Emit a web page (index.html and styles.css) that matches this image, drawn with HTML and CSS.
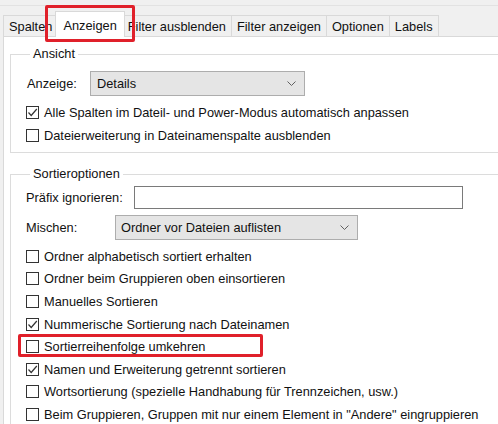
FILE: index.html
```html
<!DOCTYPE html>
<html lang="de">
<head>
<meta charset="utf-8">
<title>Anzeigen</title>
<link rel="stylesheet" href="styles.css">
</head>
<body>
<div class="window">
  <div class="topline"></div>
  <div class="tabs">
    <div class="tab">Spalten</div>
    <div class="tab tab-active">Anzeigen</div>
    <div class="tab">Filter ausblenden</div>
    <div class="tab">Filter anzeigen</div>
    <div class="tab">Optionen</div>
    <div class="tab">Labels</div>
  </div>
  <div class="panel">
    <fieldset class="group group-ansicht">
      <legend>Ansicht</legend>
      <div class="row row-field">
        <span class="label label-anzeige">Anzeige:</span>
        <div class="combo combo-anzeige"><span>Details</span><svg class="chev" width="9" height="5" viewBox="0 0 9 5"><polyline points="0.5,0.5 4.5,4.5 8.5,0.5" fill="none" stroke="#606060" stroke-width="1"/></svg></div>
      </div>
      <div class="check checked"><span class="box"><svg width="11" height="11" viewBox="0 0 11 11"><polyline points="1.5,5.5 4.2,8.5 9.8,2" fill="none" stroke="#333" stroke-width="1.2"/></svg></span>Alle Spalten im Dateil- und Power-Modus automatisch anpassen</div>
      <div class="check"><span class="box"></span>Dateierweiterung in Dateinamenspalte ausblenden</div>
    </fieldset>

    <fieldset class="group group-sort">
      <legend>Sortieroptionen</legend>
      <div class="row row-prefix">
        <span class="label label-prefix">Präfix ignorieren:</span>
        <div class="textbox"></div>
      </div>
      <div class="row row-mischen">
        <span class="label label-mischen">Mischen:</span>
        <div class="combo combo-mischen"><span>Ordner vor Dateien auflisten</span><svg class="chev" width="9" height="5" viewBox="0 0 9 5"><polyline points="0.5,0.5 4.5,4.5 8.5,0.5" fill="none" stroke="#606060" stroke-width="1"/></svg></div>
      </div>
      <div class="checks">
        <div class="check"><span class="box"></span>Ordner alphabetisch sortiert erhalten</div>
        <div class="check"><span class="box"></span>Ordner beim Gruppieren oben einsortieren</div>
        <div class="check"><span class="box"></span>Manuelles Sortieren</div>
        <div class="check checked"><span class="box"><svg width="11" height="11" viewBox="0 0 11 11"><polyline points="1.5,5.5 4.2,8.5 9.8,2" fill="none" stroke="#333" stroke-width="1.2"/></svg></span>Nummerische Sortierung nach Dateinamen</div>
        <div class="check"><span class="box"></span>Sortierreihenfolge umkehren</div>
        <div class="check checked"><span class="box"><svg width="11" height="11" viewBox="0 0 11 11"><polyline points="1.5,5.5 4.2,8.5 9.8,2" fill="none" stroke="#333" stroke-width="1.2"/></svg></span>Namen und Erweiterung getrennt sortieren</div>
        <div class="check"><span class="box"></span>Wortsortierung (spezielle Handhabung für Trennzeichen, usw.)</div>
        <div class="check"><span class="box"></span>Beim Gruppieren, Gruppen mit nur einem Element in "Andere" eingruppieren</div>
      </div>
    </fieldset>
  </div>
  <div class="mark mark-tab"></div>
  <div class="mark mark-row"></div>
</div>
</body>
</html>
```

FILE: styles.css
```css
html, body {
  margin: 0;
  padding: 0;
}
body {
  background: #f0f0f0;
  font-family: "Liberation Sans", Arial, sans-serif;
  font-size: 12.8px;
  color: #111;
  overflow: hidden;
  width: 498px;
  height: 424px;
}
.window {
  position: relative;
  width: 498px;
  height: 424px;
  overflow: hidden;
}
.topline {
  height: 5px;
  border-bottom: 1px solid #e2e2e2;
}
.tabs {
  display: flex;
  align-items: flex-end;
  height: 30px;
  padding-left: 3px;
  position: relative;
  z-index: 2;
}
.tab {
  height: 20px;
  line-height: 21px;
  padding: 0 5px 0 5px;
  border: 1px solid #d9d9d9;
  border-bottom: none;
  border-right: none;
  background: #f0f0f0;
  white-space: nowrap;
}
.tab:last-child {
  border-right: 1px solid #d9d9d9;
}
.tab-active {
  background: #fff;
  height: 25px;
  line-height: 27px;
  margin: 0 -2px -1px -2px;
  padding: 0 7px;
  border-right: 1px solid #d9d9d9;
  position: relative;
  z-index: 3;
}
.tab-active + .tab {
  border-left: none;
}
.panel {
  background: #fff;
  border-left: 1px solid #d9d9d9;
  border-top: 1px solid #d9d9d9;
  margin-left: 3px;
  padding: 9px 0 0 6px;
  height: 400px;
}
.group {
  border: 1px solid #dcdcdc;
  margin: 0 -30px 0 0;
  padding: 0 0 0 15px;
}
.group legend {
  padding: 0 3px;
  margin-left: 4px;
  line-height: 16px;
}
.group-ansicht {
  height: 97px;
  padding-top: 8px;
}
.group-sort {
  margin-top: 13px;
  padding-top: 3px;
}
.row {
  display: flex;
  align-items: center;
}
.row-field {
  height: 26px;
  margin-bottom: 5px;
}
.label-anzeige {
  width: 63px;
  padding-left: 1px;
}
.combo {
  box-sizing: border-box;
  height: 25px;
  border: 1px solid #adadad;
  background: #e5e5e5;
  display: flex;
  align-items: center;
  justify-content: space-between;
  padding: 0 6px 0 6px;
}
.combo-anzeige {
  width: 215px;
}
.combo-mischen {
  width: 243px;
  padding-left: 5px;
}
.chev {
  margin-right: 2px;
}
.check {
  display: flex;
  align-items: center;
  height: 23px;
  white-space: nowrap;
}
.checks .check {
  height: 22.6px;
}
.box {
  box-sizing: border-box;
  width: 13px;
  height: 13px;
  border: 1px solid #333;
  background: #fff;
  margin-right: 5px;
  flex: none;
  display: flex;
  align-items: center;
  justify-content: center;
}
.row-prefix {
  height: 24px;
  margin-bottom: 5px;
}
.label-prefix {
  width: 108px;
}
.textbox {
  box-sizing: border-box;
  width: 329px;
  height: 23px;
  border: 1px solid #7a7a7a;
  background: #fff;
}
.row-mischen {
  height: 26px;
  margin-bottom: 5px;
}
.label-mischen {
  width: 89px;
}
.mark {
  position: absolute;
  border: 3px solid #e0202a;
  border-radius: 2px;
  z-index: 10;
}
.mark-tab {
  left: 45px;
  top: 5px;
  width: 84px;
  height: 31px;
}
.mark-row {
  left: 18px;
  top: 334px;
  width: 239px;
  height: 17px;
}
```
